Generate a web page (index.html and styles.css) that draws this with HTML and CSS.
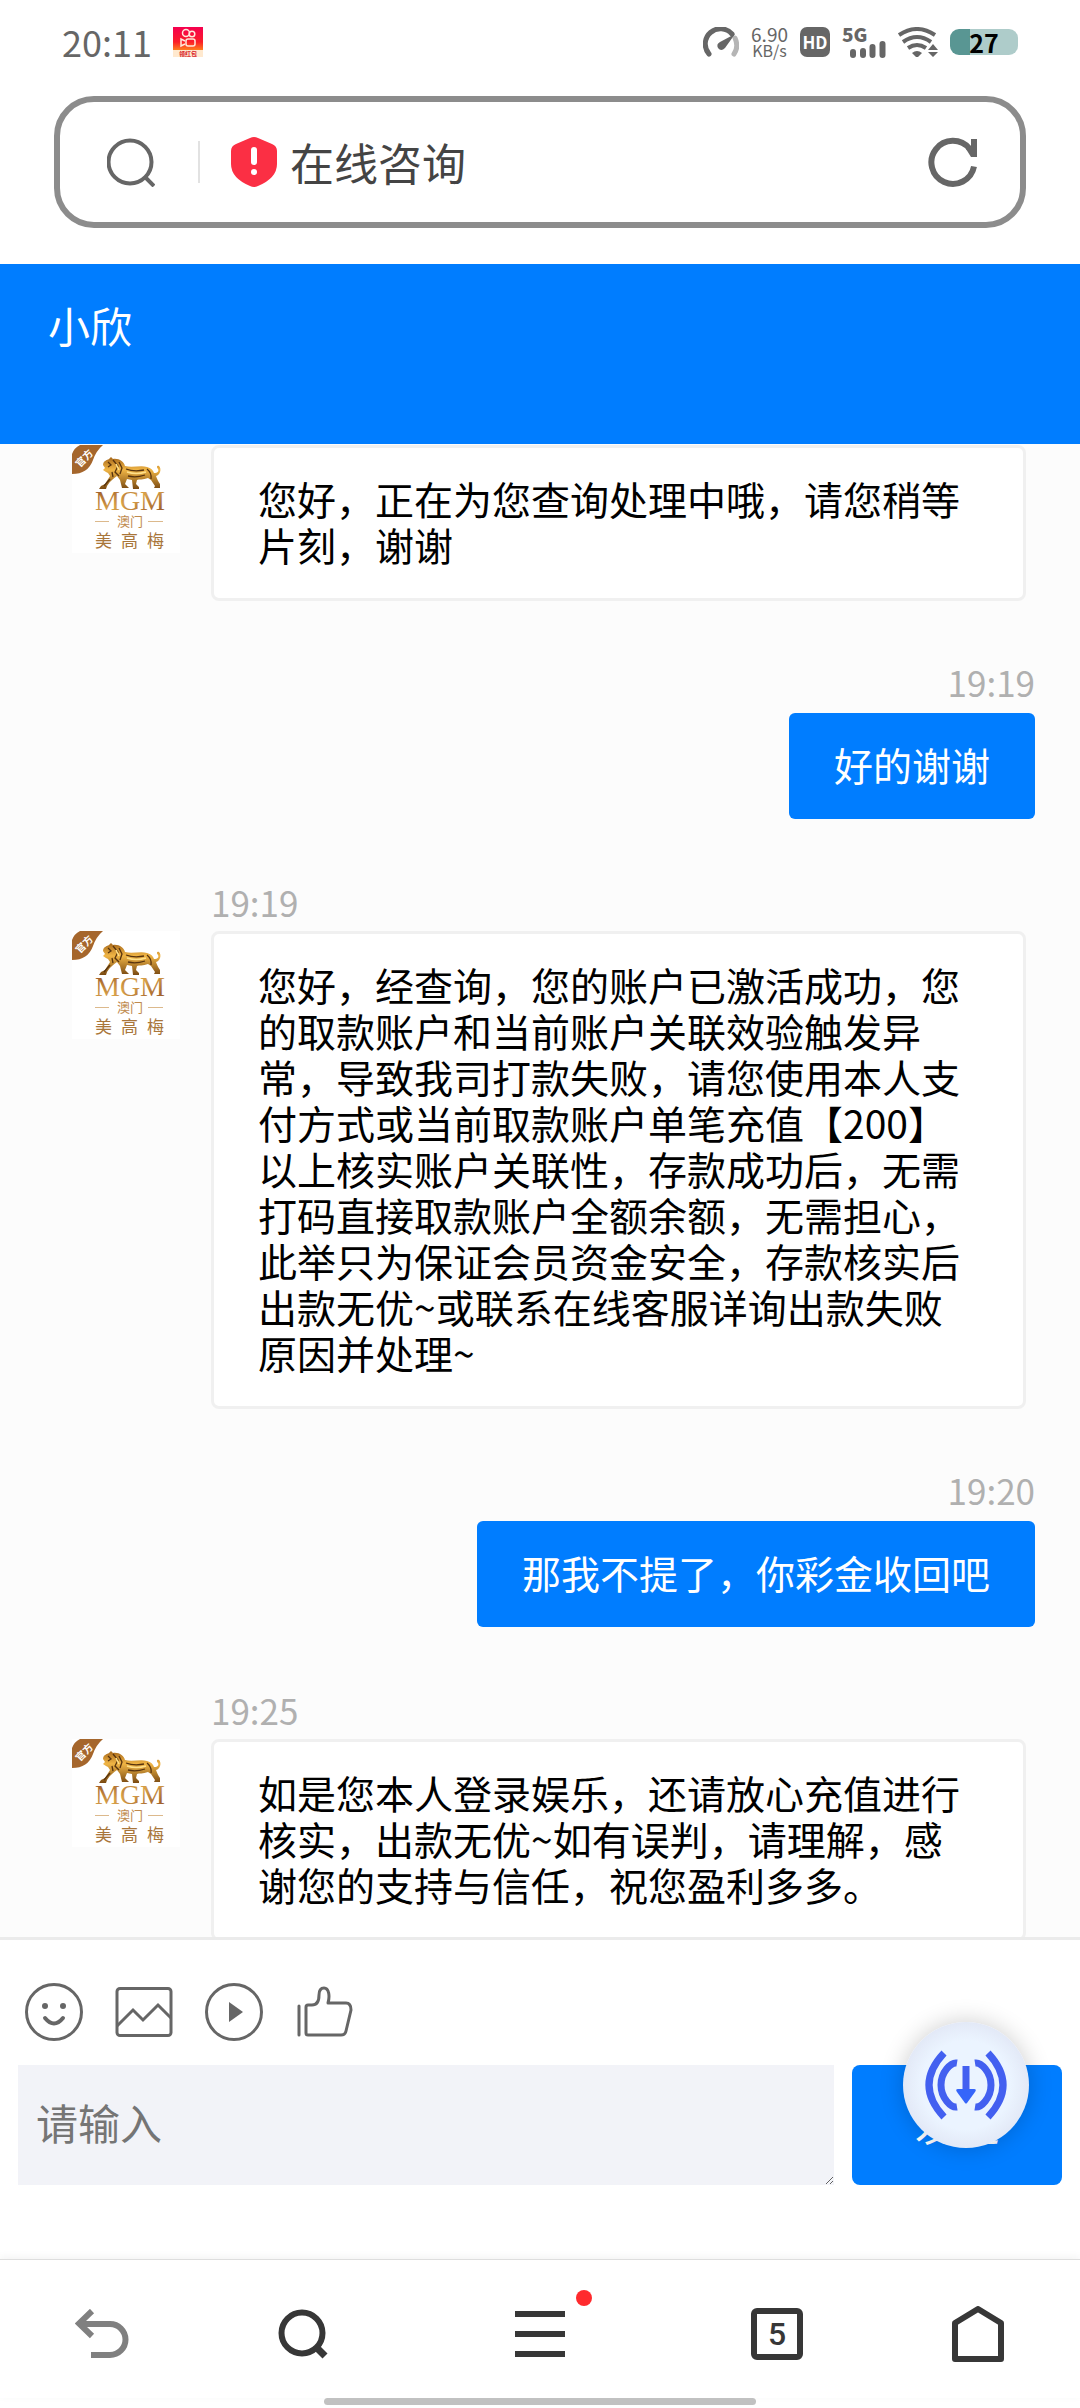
FILE: index.html
```html
<!DOCTYPE html>
<html lang="zh-CN">
<head>
    <meta charset="UTF-8">
    <meta name="viewport" content="width=device-width, initial-scale=1.0">
    <title>在线咨询</title>
    <link rel="stylesheet" href="styles.css">
</head>
<body>
    <!-- shared avatar -->
    <svg class="sprite" aria-hidden="true">
        <defs>
            <linearGradient id="gold" x1="0" y1="0" x2="0" y2="1">
                <stop offset="0" stop-color="#a5661a"/>
                <stop offset="0.4" stop-color="#f0b545"/>
                <stop offset="1" stop-color="#7a4a12"/>
            </linearGradient>
            <linearGradient id="letters" x1="0" y1="0" x2="1" y2="1">
                <stop offset="0" stop-color="#8d4a22"/>
                <stop offset="0.5" stop-color="#d9a24a"/>
                <stop offset="1" stop-color="#8d4a22"/>
            </linearGradient>
        </defs>
        <symbol id="avatar" viewBox="0 0 108 108">
            <rect width="108" height="108" fill="#fff"/>
            <path d="M8 0H31Q24 6 21 15Q16 29 0 29V9Q2 3 8 0Z" fill="#a5662c"/>
            <text class="badge-text" x="12" y="17" transform="rotate(-45 12 13)">官方</text>
            <path d="M31 20C31 16 35 15 37 14L39 12L41 14C47 13 52 17 53 21C60 23 69 20 75 22C79 23 81 25 82 28C86 28 87 26 86 24C84 22 85 20 87 21C90 24 88 30 84 31C85 34 86 36 88 39L88 43H82L83 41L79 35L76 33C71 35 67 34 65 35L64 39L67 42V44H61L60 35L55 34L53 39L57 43H50L48 35L45 31C42 33 38 36 35 41L34 44H27L29 41L33 39L38 31L36 28L34 27L31 25L33 23Z" fill="url(#gold)"/>
            <path d="M36 17L39 20L36 22M41 15L46 21L43 27L47 31M47 17L50 23L48 29M54 24Q62 27 72 25M56 31Q64 33 73 30M75 24Q80 28 79 34M40 27L41 32M32 41L38 34" fill="none" stroke="#57330e" stroke-width="1.3"/>
            <path d="M55 27Q64 30 74 27M44 19L47 25" fill="none" stroke="#ffe08a" stroke-width="1.5"/>
            <text class="mgm" x="58" y="65">MGM</text>
            <path d="M23 76.500H37M76 76.500H91" stroke="#dcb98c"/>
            <text class="macau" x="58" y="81">澳门</text>
            <text class="meigaomei" x="23 49 75" y="102">美高梅</text>
        </symbol>
    </svg>

    <div class="status-bar">
        <span class="clock">20:11</span>
        <svg class="app-icon" width="30" height="30" viewBox="0 0 30 30">
            <defs>
                <linearGradient id="app" x1="0" y1="0" x2="0" y2="1">
                    <stop offset="0" stop-color="#f5004f"/>
                    <stop offset="0.5" stop-color="#fb1e28"/>
                    <stop offset="0.8" stop-color="#ff8a1c"/>
                </linearGradient>
            </defs>
            <rect width="30" height="30" fill="url(#app)"/>
            <rect y="23" width="30" height="7" fill="#ffe9cf"/>
            <g fill="none" stroke="#ffe9dc" stroke-width="1.500">
                <circle cx="13" cy="6" r="3.500"/>
                <circle cx="19" cy="7" r="2.800"/>
                <rect x="13" y="12" width="9" height="7" rx="2"/>
                <path d="M12 14L8 12V19L12 17"/>
            </g>
            <text class="app-label" x="15" y="29">领红包</text>
        </svg>
        <div class="status-icons">
            <svg width="36" height="30" viewBox="0 0 36 30">
                <path d="M6 27A15 15 0 1 1 29 7" fill="none" stroke="#666" stroke-width="5" stroke-linecap="round"/>
                <path d="M32 11Q36 20 31 27" fill="none" stroke="#b5b5b5" stroke-width="5" stroke-linecap="round"/>
                <path d="M32 7L22 21Q18 25 15 21Q13 17 17 15Z" fill="#666"/>
            </svg>
            <div class="net-speed">
                <span class="speed">6.90</span>
                <span class="unit">KB/s</span>
            </div>
            <span class="hd">HD</span>
            <div class="signal">
                <span class="network">5G</span>
                <svg class="bars" width="36" height="17" viewBox="0 0 36 17">
                    <path d="M3 11V14M13 10V14M22.500 6V14M32.500 3V14" stroke="#666" stroke-width="6" stroke-linecap="round"/>
                </svg>
            </div>
            <svg width="40" height="30" viewBox="0 0 40 30">
                <g fill="none" stroke="#666" stroke-width="4">
                    <path d="M1 8Q19 -4 37 8"/>
                    <path d="M5 15Q19 5 33 15"/>
                    <path d="M10 21Q19 15 28 21"/>
                </g>
                <path d="M14 26Q19 22 24 26L20 30H18Z" fill="#666"/>
                <path d="M30 23L35 17L40 23ZM30 25H40L35 30Z" fill="#666"/>
            </svg>
            <span class="battery">27</span>
        </div>
    </div>

    <form class="address-bar">
        <svg width="48" height="49" viewBox="0 0 48 49" fill="none" stroke="#666" stroke-width="4">
            <circle cx="23" cy="24" r="21.500"/>
            <path d="M38 39L47 48"/>
        </svg>
        <span class="divider"></span>
        <svg width="46" height="50" viewBox="0 0 46 50">
            <path d="M19 1Q23 -1 27 1L41 7Q46 9 46 14V27Q46 41 27 49Q23 51 19 49Q0 41 0 27V14Q0 9 5 7Z" fill="#fb2f44"/>
            <path d="M23 13V25" stroke="#fff" stroke-width="6" stroke-linecap="round"/>
            <circle cx="23" cy="35" r="3" fill="#fff"/>
        </svg>
        <input class="address" type="text" value="在线咨询" aria-label="地址栏">
        <button class="icon-button" type="button" aria-label="刷新">
            <svg width="50" height="50" viewBox="0 0 50 50">
                <path d="M41.500 11.700A21.500 21.500 0 1 0 46 29.500" fill="none" stroke="#666" stroke-width="6"/>
                <path d="M43 2H49V20H43L38 12L43 9Z" fill="#666"/>
            </svg>
        </button>
    </form>

    <header class="chat-header">
        <h1>小欣</h1>
    </header>

    <main class="chat">
        <div class="message">
            <svg class="avatar" role="img" aria-label="头像"><use href="#avatar"/></svg>
            <div class="body">
                <p class="bubble">您好，正在为您查询处理中哦，请您稍等片刻，谢谢</p>
            </div>
        </div>
        <div class="message own">
            <time class="time">19:19</time>
            <p class="bubble">好的谢谢</p>
        </div>
        <div class="message">
            <svg class="avatar" role="img" aria-label="头像"><use href="#avatar"/></svg>
            <div class="body">
                <time class="time">19:19</time>
                <p class="bubble">您好，经查询，您的账户已激活成功，您的取款账户和当前账户关联效验触发异常，导致我司打款失败，请您使用本人支付方式或当前取款账户单笔充值【200】以上核实账户关联性，存款成功后，无需打码直接取款账户全额余额，无需担心，此举只为保证会员资金安全，存款核实后出款无优~或联系在线客服详询出款失败原因并处理~</p>
            </div>
        </div>
        <div class="message own">
            <time class="time">19:20</time>
            <p class="bubble">那我不提了，你彩金收回吧</p>
        </div>
        <div class="message">
            <svg class="avatar" role="img" aria-label="头像"><use href="#avatar"/></svg>
            <div class="body">
                <time class="time">19:25</time>
                <p class="bubble">如是您本人登录娱乐，还请放心充值进行核实，出款无优~如有误判，请理解，感谢您的支持与信任，祝您盈利多多。</p>
            </div>
        </div>
    </main>

    <form class="composer">
        <div class="tools">
            <button class="icon-button" type="button" aria-label="表情">
                <svg width="58" height="58" viewBox="0 0 58 58">
                    <circle cx="29" cy="29" r="27.500" fill="none" stroke="#666" stroke-width="3"/>
                    <circle cx="20" cy="23" r="3" fill="#666"/>
                    <circle cx="38" cy="23" r="3" fill="#666"/>
                    <path d="M20 35Q29 46 38 35" fill="none" stroke="#666" stroke-width="4" stroke-linecap="round"/>
                </svg>
            </button>
            <button class="icon-button" type="button" aria-label="图片">
                <svg width="58" height="58" viewBox="0 0 58 58" fill="none" stroke="#666" stroke-width="3">
                    <rect x="2" y="5.500" width="54" height="47" rx="3"/>
                    <path d="M2 43L18 27L28 37L43 22L56 35"/>
                </svg>
            </button>
            <button class="icon-button" type="button" aria-label="视频">
                <svg width="58" height="58" viewBox="0 0 58 58">
                    <circle cx="29" cy="29" r="27.500" fill="none" stroke="#666" stroke-width="3"/>
                    <path d="M24 19L38 29L24 39Z" fill="#666"/>
                </svg>
            </button>
            <button class="icon-button" type="button" aria-label="评价">
                <svg width="58" height="58" viewBox="0 0 58 58" fill="none" stroke="#666" stroke-width="3" stroke-linecap="round" stroke-linejoin="round">
                    <path d="M4 23V52"/>
                    <path d="M11 24V50Q11 52 13 52H46Q50 52 51 48L56 27Q56 20 51 20H33C35 13 34 5 29 5C25 5 24 8 24 12C24 19 21 22 17 22H13Q11 22 11 24Z"/>
                </svg>
            </button>
        </div>
        <div class="input-row">
            <textarea class="message-input" placeholder="请输入" aria-label="请输入"></textarea>
            <button class="send" type="button">发送</button>
        </div>
        <button class="float-ball" type="button" aria-label="下载">
            <svg width="84" height="70" viewBox="0 0 84 70" fill="none" stroke="#4360f0">
                <path d="M20 3Q-10 35 20 67M64 3Q94 35 64 67" stroke-width="7"/>
                <path d="M33 13C27 12 17 22 17 35C17 48 27 58 33 57M51 13C57 12 67 22 67 35C67 48 57 58 51 57" stroke-width="7"/>
                <path d="M42 16V42" stroke-width="7"/>
                <path d="M34 39H50Q53 39 51 42L43 53Q42 54 41 53L33 42Q31 39 34 39Z" fill="#3565fa" stroke="none"/>
            </svg>
        </button>
    </form>

    <nav class="bottom-nav">
        <button class="icon-button" type="button" aria-label="返回">
            <svg width="54" height="50" viewBox="0 0 54 50" fill="none" stroke="#808080" stroke-width="6">
                <path d="M17 2L4 14.500L17 27M6 15H35A15.500 15.500 0 0 1 35 46H16"/>
            </svg>
        </button>
        <button class="icon-button" type="button" aria-label="搜索">
            <svg width="50" height="50" viewBox="0 0 50 50" fill="none" stroke="#373737">
                <circle cx="24" cy="24" r="20.500" stroke-width="6"/>
                <path d="M38 38L47 47" stroke-width="7"/>
            </svg>
        </button>
        <button class="icon-button menu" type="button" aria-label="菜单">
            <svg width="50" height="46" viewBox="0 0 50 46" stroke="#373737" stroke-width="6">
                <path d="M0 3H50M0 23H50M0 43H50"/>
            </svg>
            <span class="dot"></span>
        </button>
        <button class="tabs" type="button">5</button>
        <button class="icon-button" type="button" aria-label="主页">
            <svg width="52" height="56" viewBox="0 0 52 56" fill="none" stroke="#373737" stroke-width="6" stroke-linejoin="round">
                <path d="M3 17L26 3L49 17V53H3Z"/>
            </svg>
        </button>
    </nav>
    <div class="home-indicator"></div>
</body>
</html>
```

FILE: styles.css
```css
* {
    box-sizing: border-box;
}

body {
    margin: 0;
    height: 100vh;
    display: flex;
    flex-direction: column;
    overflow: hidden;
    background: #fff;
    color: #000;
    font-family: 'Noto Sans CJK SC', 'Noto Sans', sans-serif;
}

button,
input,
textarea {
    font-family: inherit;
    border: none;
    margin: 0;
    padding: 0;
    background: none;
}

svg {
    display: block;
    flex-shrink: 0;
}

.sprite {
    position: absolute;
    width: 0;
    height: 0;
}

.icon-button {
    display: block;
    cursor: pointer;
}

/* Status bar */
.status-bar {
    height: 84px;
    flex-shrink: 0;
    padding: 0 62px;
    display: flex;
    align-items: center;
    color: #666;
}

.clock {
    padding-bottom: 2px;
    font-size: 36px;
    line-height: 44px;
}

.app-icon {
    margin-left: 21px;
}

.app-label {
    font-size: 6px;
    font-weight: bold;
    fill: #d8232a;
    text-anchor: middle;
}

.status-icons {
    margin-left: auto;
    display: flex;
    align-items: center;
    gap: 12px;
}

.net-speed {
    display: flex;
    flex-direction: column;
    align-items: center;
}

.speed {
    font-size: 19px;
    line-height: 16px;
}

.unit {
    font-size: 16px;
    line-height: 16px;
}

.hd {
    width: 30px;
    height: 30px;
    border-radius: 7px;
    background: #666;
    color: #fff;
    font-size: 17px;
    line-height: 30px;
    font-weight: bold;
    text-align: center;
}

.signal {
    width: 44px;
    display: flex;
    flex-direction: column;
}

.network {
    font-size: 19px;
    line-height: 14px;
    font-weight: 900;
}

.bars {
    align-self: flex-end;
}

.battery {
    width: 68px;
    height: 26px;
    border-radius: 9px;
    background: linear-gradient(to right, #599693 30%, #aeccca 30%);
    color: #000;
    font-size: 25px;
    line-height: 26px;
    font-weight: bold;
    text-align: center;
}

/* Address bar */
.address-bar {
    height: 132px;
    flex-shrink: 0;
    margin: 12px 54px 36px;
    padding: 0 42px 0 47px;
    border: 6px solid #8c8c8c;
    border-radius: 40px;
    display: flex;
    align-items: center;
}

.divider {
    width: 2px;
    height: 42px;
    margin: 0 31px 0 43px;
    background: #e2e2e2;
}

.address {
    flex: 1;
    min-width: 0;
    margin-left: 13px;
    color: #444;
    font-size: 44px;
    line-height: 60px;
    outline: none;
}

/* Chat */
.chat-header {
    height: 180px;
    flex-shrink: 0;
    padding: 34px 48px;
    background: #007dff;
    color: #fff;
}

.chat-header h1 {
    margin: 0;
    font-size: 42px;
    line-height: 54px;
    font-weight: normal;
}

.chat {
    flex: 1;
    min-height: 0;
    overflow: hidden;
    padding: 1px 45px 0 72px;
    background: #fcfcfc;
    display: flex;
    flex-direction: column;
    gap: 60px;
}

.message {
    flex-shrink: 0;
    display: grid;
    grid-template-columns: 108px 1fr;
    column-gap: 31px;
    margin-right: 9px;
}

.body {
    display: contents;
}

.message .avatar {
    width: 108px;
    height: 108px;
    grid-column: 1;
    grid-row: 2;
}

.message .bubble {
    grid-column: 2;
    grid-row: 2;
}

.message .time {
    grid-column: 2;
    grid-row: 1;
}

.message.own {
    display: flex;
    flex-direction: column;
    align-items: flex-end;
    margin-right: 0;
}

.time {
    padding-bottom: 6px;
    color: #b0b0b0;
    font-size: 35px;
    line-height: 46px;
}

.own .time {
    padding-bottom: 10px;
    line-height: 42px;
}

.bubble {
    margin: 0;
    padding: 27px 44px 31px;
    border: 3px solid #f0f0f0;
    border-radius: 8px;
    background: #fff;
    font-size: 39px;
    line-height: 46px;
}

.own .bubble {
    padding: 28px 45px 32px;
    border: none;
    border-radius: 6px;
    background: #007dff;
    color: #fff;
}

/* Avatar lettering */
.badge-text {
    font-size: 10px;
    font-weight: bold;
    fill: #fff;
    text-anchor: middle;
}

.mgm {
    font-family: 'Liberation Serif', serif;
    font-size: 28px;
    fill: url(#letters);
    text-anchor: middle;
}

.macau {
    font-size: 13px;
    fill: #c08a4e;
    text-anchor: middle;
}

.meigaomei {
    font-size: 17px;
    fill: #a9763a;
}

/* Composer */
.composer {
    position: relative;
    flex-shrink: 0;
    padding: 43px 18px 74px;
    border-top: 3px solid #ebebeb;
}

.tools {
    display: flex;
    gap: 32px;
    padding-left: 7px;
    margin-bottom: 24px;
}

.input-row {
    display: flex;
    gap: 18px;
}

.message-input {
    flex: 1;
    min-width: 0;
    height: 120px;
    padding: 32px 18px;
    background: #f2f3f8;
    font-size: 42px;
    line-height: 50px;
    outline: none;
}

.message-input::placeholder {
    color: #757575;
}

.send {
    width: 210px;
    padding-bottom: 6px;
    border-radius: 8px;
    background: #007dff;
    color: #fff;
    font-size: 42px;
    cursor: pointer;
}

.float-ball {
    position: absolute;
    top: 82px;
    right: 51px;
    width: 126px;
    height: 126px;
    display: flex;
    align-items: center;
    justify-content: center;
    border-radius: 50%;
    background: radial-gradient(circle, #ebf4ff 50%, #e2e8f6 72%);
    box-shadow: 0 0 24px rgba(0, 0, 0, 0.2);
}

/* Browser navigation */
.bottom-nav {
    height: 139px;
    flex-shrink: 0;
    padding-top: 10px;
    border-top: 1px solid #dedede;
    box-shadow: 0 -2px 8px rgba(0, 0, 0, 0.05);
    display: grid;
    grid-template-columns: 34fr 33fr 46fr 33fr 34fr;
    align-items: center;
    justify-items: center;
}

.menu {
    position: relative;
}

.dot {
    position: absolute;
    top: -21px;
    right: -27px;
    width: 16px;
    height: 16px;
    border-radius: 50%;
    background: #ff2a2d;
}

.tabs {
    width: 52px;
    height: 52px;
    border: 6px solid #373737;
    border-radius: 6px;
    color: #373737;
    font-family: Roboto, sans-serif;
    font-size: 32px;
    font-weight: 500;
    line-height: 40px;
}

.home-indicator {
    width: 40%;
    height: 7px;
    flex-shrink: 0;
    margin: 0 auto 3px;
    border-radius: 4px;
    background: #c1c1c1;
}
```
